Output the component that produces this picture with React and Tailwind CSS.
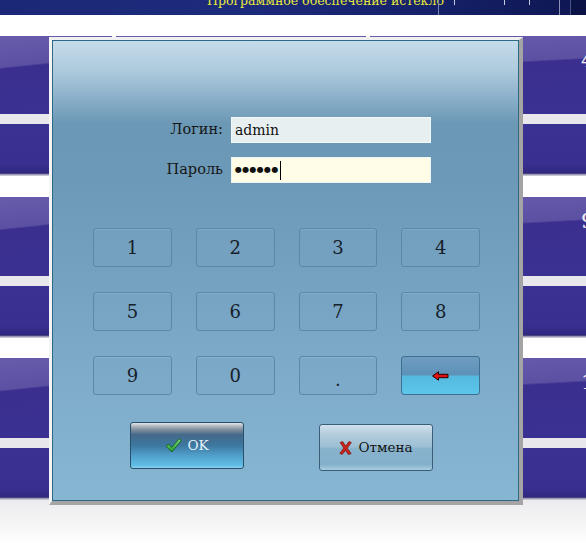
// App.jsx — login dialog over the tiles screen
const serif = { fontFamily: '"DejaVu Serif", "Liberation Serif", serif' };

function Tile({ w, upper, gloss, label }) {
  return (
    <div className="flex flex-col shrink-0" style={{ width: w }}>
      <div className={`${upper} ${gloss} relative`}>
        {label && (
          <div className="pl-[211px] pt-[14px] text-[21px] leading-none text-white/90" style={serif}>
            {label}
          </div>
        )}
      </div>
      <div className="h-[10px] bg-[#e8e8ec]" />
      <div className="h-[49px] bg-[linear-gradient(180deg,#3a3194,#382f90_80%,#30287f)]" />
      <div className="h-[3px] bg-[linear-gradient(180deg,#231b66,#9a98b4,#dcdce2)]" />
    </div>
  );
}

function TileRow({ upper, label }) {
  return (
    <div className="flex gap-[4px]">
      <Tile w={112} upper={upper} gloss="bg-[linear-gradient(174deg,#675cac_0%,#5b50a2_35%,#3a2f8e_37%,#3a3194_100%)]" />
      <Tile w={250} upper={upper} gloss="bg-[linear-gradient(177deg,#675cac_0%,#5b50a2_38%,#3a2f8e_40%,#3a3194_100%)]" />
      <Tile w={250} upper={upper} label={label} gloss="bg-[linear-gradient(177deg,#675cac_0%,#5b50a2_36%,#3a2f8e_38%,#3a3194_100%)]" />
    </div>
  );
}

function Key({ children }) {
  return (
    <div
      className="h-[39px] flex items-center justify-center rounded-[3px] border border-[#5a88a7] bg-[#79a6c3]/30 shadow-[inset_0_1px_0_rgba(255,255,255,0.12)] text-[18px] text-[#16202a]"
      style={serif}
    >
      {children}
    </div>
  );
}

function BackKey() {
  return (
    <div className="h-[39px] flex items-center justify-center rounded-[3px] border border-[#3d6f90] bg-[linear-gradient(180deg,#6f9dc0_0%,#5e91b8_48%,#56b9df_52%,#5cc6ea_100%)]">
      <svg width="17" height="10" viewBox="0 0 17 10">
        <polygon points="0.5,5 6.5,0.8 6.5,3.3 16,3.3 16,6.7 6.5,6.7 6.5,9.2" fill="#e31111" stroke="#2a0000" strokeWidth="1" strokeLinejoin="round" />
      </svg>
    </div>
  );
}

function CheckIcon() {
  return (
    <svg width="17" height="15" viewBox="0 0 17 15">
      <defs>
        <linearGradient id="ck" x1="0" y1="0" x2="0" y2="1">
          <stop offset="0" stopColor="#7fe07a" />
          <stop offset="1" stopColor="#1f9a2c" />
        </linearGradient>
      </defs>
      <polygon points="1,8.2 3.8,6 6.6,9.4 14.2,0.8 16.2,2.6 6.8,14" fill="url(#ck)" stroke="#175a1c" strokeWidth="0.9" strokeLinejoin="round" />
    </svg>
  );
}

function CrossIcon() {
  return (
    <svg width="13" height="14" viewBox="0 0 13 14">
      <path d="M1 1.5 L3.8 0.6 L6.6 5 L10 0.4 L12.4 1.6 L8.3 7.2 L12.2 12.6 L9.4 13.6 L6.4 9.4 L3.2 13.5 L0.8 12.4 L4.7 7.1 Z" fill="#c5231b" stroke="#7a0e0a" strokeWidth="0.6" strokeLinejoin="round" />
    </svg>
  );
}

export default function App() {
  return (
    <div className="relative w-[586px] h-[543px] overflow-hidden bg-white">
      {/* top bar */}
      <div className="h-[15px] flex bg-[linear-gradient(90deg,#1b2877,#1d2b7c_40%,#16226b_70%,#0e1752)] overflow-hidden">
        <div className="w-[207px] shrink-0" />
        <div className="w-[231px] shrink-0 -mt-[6px] text-[12.5px] leading-[14px] text-[#e8e83a] whitespace-nowrap" style={serif}>
          Программное обеспечение истекло
        </div>
        <div className="w-px bg-[#7d86ad] shrink-0" />
        <div className="w-[15px] shrink-0" />
        <div className="w-px h-[5px] bg-[#c8cce0] shrink-0" />
        <div className="w-[49px] shrink-0" />
        <div className="w-px h-[5px] bg-[#c8cce0] shrink-0" />
        <div className="w-[24px] shrink-0" />
        <div className="w-px h-[5px] bg-[#c8cce0] shrink-0" />
        <div className="w-[29px] shrink-0" />
        <div className="w-px bg-[#8a92b8] shrink-0" />
        <div className="w-[10px] shrink-0" />
        <div className="w-px bg-[#4a5488] shrink-0" />
        <div className="flex-1 bg-[#0b1245]" />
      </div>

      <div className="h-[21px]" />
      <TileRow upper="h-[78px]" label="4" />
      <div className="h-[21px]" />
      <TileRow upper="h-[79px]" label="9" />
      <div className="h-[20px]" />
      <TileRow upper="h-[80px]" label="1" />
      <div className="h-[43px] bg-[linear-gradient(180deg,#ececee,#f6f6f7_60%,#ffffff)]" />

      {/* login dialog */}
      <div className="absolute left-[49px] top-[37px] w-[474px] h-[468px] border-l-[3px] border-t-[3px] border-r-[4px] border-b-[4px] border-l-[#f4f4f4] border-t-[#f0f0f0] border-r-[#a4a4a4] border-b-[#a4a4a4]">
        <div className="h-full border border-[#2f6884] bg-[linear-gradient(180deg,#c5dcea_0%,#abc8db_7%,#87adc7_13%,#6b98b5_18%,#6c99b7_30%,#73a1bf_50%,#7dabc9_72%,#87b6d3_100%)]">
          <div className="pt-[76px] flex flex-col gap-[14px]" style={serif}>
            <div className="flex items-center">
              <div className="w-[178px] pr-[8px] text-right text-[14.5px] text-[#161616]">Логин:</div>
              <div className="w-[200px] h-[26px] flex items-center px-[3px] bg-[#e8eff1] border border-[#f4f8fa] text-[14px] text-[#111]">admin</div>
            </div>
            <div className="flex items-center">
              <div className="w-[178px] pr-[8px] text-right text-[14.5px] text-[#161616]">Пароль</div>
              <div className="w-[200px] h-[26px] flex items-center px-[3px] bg-[#fffde7] border border-[#eef3f4] text-[#111]">
                <span className="text-[8px] tracking-[0.3px]" style={{ fontFamily: '"DejaVu Sans", sans-serif' }}>●●●●●●</span>
                <span className="w-px h-[19px] bg-black ml-px" />
              </div>
            </div>
          </div>

          <div className="mt-[45px] ml-[40px] w-[387px] grid grid-cols-4 gap-x-[24px] gap-y-[25px]">
            <Key>1</Key>
            <Key>2</Key>
            <Key>3</Key>
            <Key>4</Key>
            <Key>5</Key>
            <Key>6</Key>
            <Key>7</Key>
            <Key>8</Key>
            <Key>9</Key>
            <Key>0</Key>
            <Key><span className="pt-[8px]">.</span></Key>
            <BackKey />
          </div>

          <div className="mt-[27px] flex items-start" style={serif}>
            <div className="ml-[77px] w-[114px] h-[47px] rounded-[3px] border border-[#27506d] bg-[linear-gradient(180deg,#e4e7e9_0%,#b6bec4_6%,#8592a0_14%,#44698a_26%,#3d78a0_50%,#4f9fca_72%,#5fbde4_94%,#8fd3ee_100%)] flex items-center justify-center gap-[5px]">
              <CheckIcon />
              <span className="text-[13.5px] text-[#e6f2fa]">OK</span>
            </div>
            <div className="ml-[75px] mt-[2px] w-[114px] h-[47px] rounded-[3px] border border-[#3a5e78] bg-[linear-gradient(180deg,#d0e1eb_0%,#b4cddd_20%,#9cbfd4_48%,#88b3cd_52%,#84b0cc_88%,#a9cde2_100%)] flex items-center justify-center gap-[6px]">
              <CrossIcon />
              <span className="text-[13.5px] text-[#121212]">Отмена</span>
            </div>
          </div>
        </div>
      </div>
    </div>
  );
}
